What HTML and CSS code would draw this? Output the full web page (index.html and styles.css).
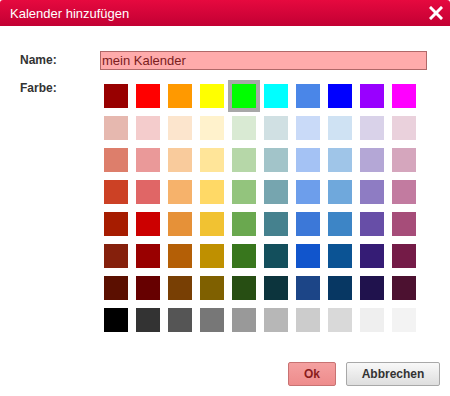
FILE: index.html
```html
<!DOCTYPE html>
<html lang="de">
<head>
  <meta charset="UTF-8">
  <title>Kalender hinzufügen</title>
  <link rel="stylesheet" href="styles.css">
</head>
<body>
  <div class="dialog">
    <div class="titlebar">
      <span class="title">Kalender hinzufügen</span>
      <svg class="close" width="14" height="14" viewBox="0 0 14 14">
        <path d="M2 2 L12 12 M12 2 L2 12" stroke="#fff" stroke-width="3" stroke-linecap="square" />
      </svg>
    </div>

    <div class="content">
      <div class="row">
        <label class="label" for="name">Name:</label>
        <input class="name-input" id="name" type="text" value="mein Kalender">
      </div>
      <div class="row">
        <span class="label label-farbe">Farbe:</span>
        <div class="palette" id="palette"></div>
      </div>
    </div>

    <div class="buttons">
      <button class="btn btn-ok">Ok</button>
      <button class="btn btn-cancel">Abbrechen</button>
    </div>
  </div>

  <script>
    var colors = [
      '#980000', '#ff0000', '#ff9900', '#ffff00', '#00ff00', '#00ffff', '#4a86e8', '#0000ff', '#9900ff', '#ff00ff',
      '#e6b8af', '#f4cccc', '#fce5cd', '#fff2cc', '#d9ead3', '#d0e0e3', '#c9daf8', '#cfe2f3', '#d9d2e9', '#ead1dc',
      '#dd7e6b', '#ea9999', '#f9cb9c', '#ffe599', '#b6d7a8', '#a2c4c9', '#a4c2f4', '#9fc5e8', '#b4a7d6', '#d5a6bd',
      '#cc4125', '#e06666', '#f6b26b', '#ffd966', '#93c47d', '#76a5af', '#6d9eeb', '#6fa8dc', '#8e7cc3', '#c27ba0',
      '#a61c00', '#cc0000', '#e69138', '#f1c232', '#6aa84f', '#45818e', '#3c78d8', '#3d85c6', '#674ea7', '#a64d79',
      '#85200c', '#990000', '#b45f06', '#bf9000', '#38761d', '#134f5c', '#1155cc', '#0b5394', '#351c75', '#741b47',
      '#5b0f00', '#660000', '#783f04', '#7f6000', '#274e13', '#0c343d', '#1c4587', '#073763', '#20124d', '#4c1130',
      '#000000', '#333333', '#555555', '#777777', '#999999', '#b7b7b7', '#cccccc', '#d9d9d9', '#efefef', '#f3f3f3'
    ];

    var palette = document.getElementById('palette');
    colors.forEach(function(color, i) {
      var cell = document.createElement('div');
      cell.className = 'cell' + (i === 4 ? ' selected' : '');
      var swatch = document.createElement('div');
      swatch.className = 'swatch';
      swatch.style.backgroundColor = color;
      cell.appendChild(swatch);
      palette.appendChild(cell);
    });
  </script>
</body>
</html>
```

FILE: styles.css
```css
* {
  margin: 0;
  padding: 0;
  box-sizing: border-box;
}

body {
  font-family: "Liberation Sans", Arial, sans-serif;
  background-color: #fff;
  width: 450px;
  height: 396px;
}

.dialog {
  width: 450px;
  height: 396px;
  display: flex;
  flex-direction: column;
}

.titlebar {
  height: 26px;
  background: linear-gradient(#e6093f, #c20033);
  border-radius: 3px 3px 0 0;
  display: flex;
  align-items: center;
  justify-content: space-between;
  padding: 0 7px 0 10px;
}

.title {
  color: #fff;
  font-size: 13px;
}

.close {
  display: block;
}

.content {
  padding: 25px 0 0 20px;
  display: flex;
  flex-direction: column;
  gap: 10px;
}

.row {
  display: flex;
  align-items: flex-start;
}

.label {
  width: 80px;
  font-size: 12px;
  font-weight: bold;
  color: #333;
  line-height: 19px;
}

.label-farbe {
  line-height: 16px;
}

.name-input {
  width: 327px;
  height: 19px;
  background-color: #ffabab;
  border: 1px solid #b06868;
  color: #7a2020;
  font-family: "Liberation Sans", Arial, sans-serif;
  font-size: 13px;
  padding: 0 1px;
  outline: none;
}

.palette {
  display: grid;
  grid-template-columns: repeat(10, 32px);
  grid-auto-rows: 32px;
}

.cell {
  padding: 4px;
}

.cell.selected {
  background-color: #a8a8a8;
}

.swatch {
  width: 24px;
  height: 24px;
}

.buttons {
  display: flex;
  justify-content: flex-end;
  gap: 10px;
  padding: 26px 10px 0 0;
}

.btn {
  height: 24px;
  font-family: "Liberation Sans", Arial, sans-serif;
  font-size: 12px;
  font-weight: bold;
  border-radius: 2px;
}

.btn-ok {
  width: 48px;
  background: linear-gradient(#f4a0a0, #ee8c8c);
  border: 1px solid #c87272;
  color: #8a1c1c;
}

.btn-cancel {
  width: 94px;
  background: linear-gradient(#f8f8f8, #dedede);
  border: 1px solid #a8a8a8;
  color: #333;
}
```
